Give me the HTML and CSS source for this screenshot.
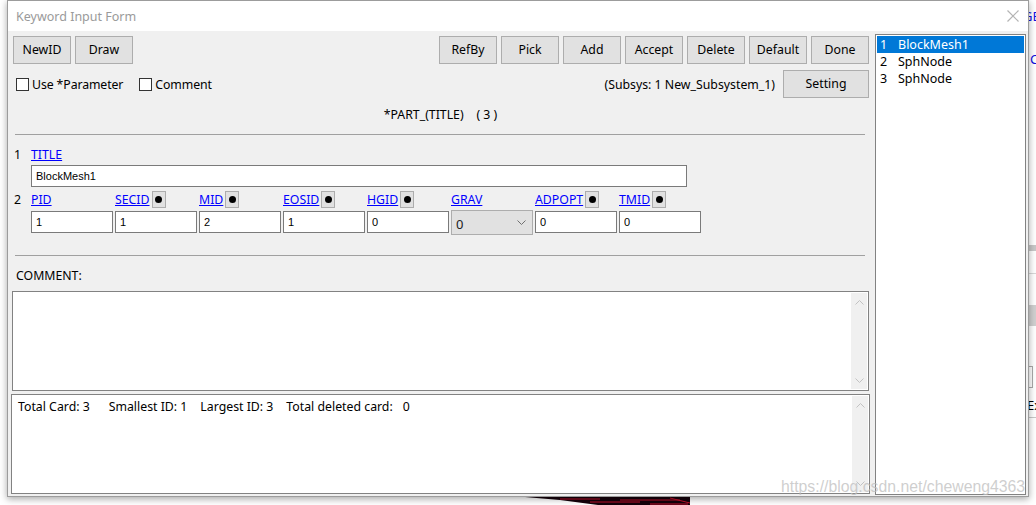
FILE: index.html
```html
<!DOCTYPE html>
<html lang="en">
<head>
    <meta charset="UTF-8">
    <title>Keyword Input Form</title>
    <link rel="stylesheet" href="styles.css">
</head>
<body>
    <div class="desktop">
        <div class="window">
            <div class="titlebar">
                <span class="title">Keyword Input Form</span>
                <svg class="close" width="12" height="12" viewBox="0 0 12 12"><path d="M0.5 0.5 L11.5 11.5 M11.5 0.5 L0.5 11.5" stroke="#b4b4b4" stroke-width="1.2" fill="none"/></svg>
            </div>
            <div class="client">
                <div class="main">
                    <!-- Command buttons -->
                    <div class="toolbar">
                        <div class="btn-group">
                            <button class="btn">NewID</button>
                            <button class="btn">Draw</button>
                        </div>
                        <div class="btn-group">
                            <button class="btn">RefBy</button>
                            <button class="btn">Pick</button>
                            <button class="btn">Add</button>
                            <button class="btn">Accept</button>
                            <button class="btn">Delete</button>
                            <button class="btn">Default</button>
                            <button class="btn">Done</button>
                        </div>
                    </div>

                    <div class="options-row">
                        <label class="check"><span class="box"></span>Use *Parameter</label>
                        <label class="check"><span class="box"></span>Comment</label>
                        <span class="subsys">(Subsys: 1 New_Subsystem_1)</span>
                        <button class="btn btn-wide">Setting</button>
                    </div>

                    <div class="keyword">*PART_(TITLE)    ( 3 )</div>
                    <div class="sep"></div>

                    <!-- Card 1 -->
                    <div class="card">
                        <span class="num">1</span>
                        <div class="label"><a class="field">TITLE</a></div>
                        <input class="field-input title-input" value="BlockMesh1">
                    </div>

                    <!-- Card 2 -->
                    <div class="card card-2">
                        <span class="num">2</span>
                        <div class="label"><a class="field">PID</a></div>
                        <div class="label"><a class="field">SECID</a><span class="pick"></span></div>
                        <div class="label"><a class="field">MID</a><span class="pick"></span></div>
                        <div class="label"><a class="field">EOSID</a><span class="pick"></span></div>
                        <div class="label"><a class="field">HGID</a><span class="pick"></span></div>
                        <div class="label"><a class="field">GRAV</a></div>
                        <div class="label"><a class="field">ADPOPT</a><span class="pick"></span></div>
                        <div class="label"><a class="field">TMID</a><span class="pick"></span></div>

                        <span></span>
                        <input class="field-input" value="1">
                        <input class="field-input" value="1">
                        <input class="field-input" value="2">
                        <input class="field-input" value="1">
                        <input class="field-input" value="0">
                        <div class="combo">
                            <span>0</span>
                            <svg width="9" height="5" viewBox="0 0 9 5"><path d="M0.5 0.5 L4.5 4.5 L8.5 0.5" stroke="#707070" fill="none"/></svg>
                        </div>
                        <input class="field-input" value="0">
                        <input class="field-input" value="0">
                    </div>

                    <div class="sep sep-2"></div>

                    <div class="comment-label">COMMENT:</div>
                    <div class="textbox comment">
                        <div class="text"></div>
                        <div class="scroll">
                            <svg width="9" height="5" viewBox="0 0 9 5"><path d="M0.5 4.5 L4.5 0.5 L8.5 4.5" stroke="#c2c2c2" fill="none"/></svg>
                            <svg width="9" height="5" viewBox="0 0 9 5"><path d="M0.5 0.5 L4.5 4.5 L8.5 0.5" stroke="#c2c2c2" fill="none"/></svg>
                        </div>
                    </div>
                    <div class="textbox status">
                        <div class="text">
                            <span class="stat stat-first">Total Card: 3</span>
                            <span class="stat">Smallest ID: 1</span>
                            <span class="stat">Largest ID: 3</span>
                            <span class="stat stat-label">Total deleted card:</span>
                            <span>0</span>
                        </div>
                        <div class="scroll">
                            <svg width="9" height="5" viewBox="0 0 9 5"><path d="M0.5 4.5 L4.5 0.5 L8.5 4.5" stroke="#c2c2c2" fill="none"/></svg>
                            <svg width="9" height="5" viewBox="0 0 9 5"><path d="M0.5 0.5 L4.5 4.5 L8.5 0.5" stroke="#c2c2c2" fill="none"/></svg>
                        </div>
                    </div>
                </div>

                <!-- Keyword list -->
                <ul class="list">
                    <li class="selected"><span class="idx">1</span>BlockMesh1</li>
                    <li><span class="idx">2</span>SphNode</li>
                    <li><span class="idx">3</span>SphNode</li>
                </ul>
            </div>
            <div class="watermark">https://blog.csdn.net/cheweng4363</div>
        </div>

        <!-- Window underneath -->
        <div class="behind">
            <span class="ghost-link">GE</span>
            <span class="ghost-link ghost-c">C</span>
            <div class="ghost-bar"></div>
            <div class="ghost-line"></div>
            <div class="ghost-bar ghost-bar-2"></div>
            <div class="ghost-box"></div>
            <span class="ghost-text">Ex</span>
            <div class="ghost-line ghost-line-2"></div>
        </div>
    </div>
    <div class="floor">
        <svg width="1036" height="8" viewBox="0 0 1036 8">
            <polygon points="525,0 690,0 690,8 598,8 560,3" fill="#14000a"/>
            <path d="M560 2 L600 2 M590 5 L640 5 M620 3 L680 3 M650 7 L688 7 M670 1 L690 6" stroke="#c4102c" stroke-width="1"/>
        </svg>
    </div>
</body>
</html>
```

FILE: styles.css
```css
* {
    box-sizing: border-box;
}
body {
    margin: 0;
    width: 1036px;
    height: 505px;
    overflow: hidden;
    background-color: #fff;
    font-family: "Noto Sans", "Noto Sans CJK SC", sans-serif;
    font-size: 12.3px;
    color: #000;
}
.desktop {
    display: flex;
    padding-left: 7px;
    height: 497px;
}
.window {
    position: relative;
    z-index: 1;
    width: 1022px;
    height: 497px;
    border: 1px solid #9c9c9c;
    background-color: #f0f0f0;
    box-shadow: 0 2px 7px rgba(0, 0, 0, 0.35);
    display: flex;
    flex-direction: column;
}
.titlebar {
    height: 30px;
    background-color: #fff;
    display: flex;
    align-items: center;
    justify-content: space-between;
    padding: 0 9px 0 8px;
}
.title {
    color: #9a9a9a;
    font-size: 12.5px;
}
.client {
    flex: 1;
    display: flex;
    gap: 2px;
    padding-right: 2px;
}
.main {
    width: 865px;
    display: flex;
    flex-direction: column;
}
.btn {
    width: 58px;
    height: 28px;
    padding: 0 0 1px;
    background-color: #e1e1e1;
    border: 1px solid #adadad;
    font-family: inherit;
    font-size: 12.3px;
    color: #000;
}
.btn-wide {
    width: 86px;
}
.toolbar {
    margin-top: 5px;
    padding: 0 4px 0 5px;
    display: flex;
    justify-content: space-between;
}
.btn-group {
    display: flex;
    gap: 4px;
}
.options-row {
    margin-top: 6px;
    height: 28px;
    padding: 0 4px 0 8px;
    display: flex;
    align-items: center;
}
.check {
    display: flex;
    align-items: center;
    gap: 3px;
    margin-right: 16px;
    letter-spacing: -0.1px;
}
.check .box {
    width: 13px;
    height: 13px;
    border: 1px solid #333;
    background-color: #fff;
}
.subsys {
    margin-left: auto;
    margin-right: 8px;
}
.keyword {
    margin-top: 7px;
    line-height: 20px;
    text-align: center;
    white-space: pre;
}
.sep {
    margin: 9px 8px 0 7px;
    border-top: 1px solid #a0a0a0;
}
.card {
    display: grid;
    grid-template-columns: 15px repeat(8, 82px);
    column-gap: 2px;
    row-gap: 2px;
    padding-left: 6px;
    margin-top: 11px;
    align-items: center;
}
.card-2 {
    margin-top: 4px;
    row-gap: 3px;
}
.num {
    line-height: 17px;
}
.label {
    height: 17px;
    display: flex;
    align-items: center;
    gap: 2px;
}
.field {
    color: #0000ff;
    text-decoration: underline;
    cursor: pointer;
}
.pick {
    width: 14px;
    height: 17px;
    background-color: #e1e1e1;
    border: 1px solid #adadad;
    display: flex;
    align-items: center;
    justify-content: center;
}
.pick::after {
    content: "";
    width: 7px;
    height: 7px;
    border-radius: 50%;
    background-color: #000;
}
.field-input {
    width: 82px;
    height: 22px;
    margin: 0;
    padding: 0 4px;
    border: 1px solid #7a7a7a;
    background-color: #fff;
    font-family: "Liberation Sans", Arial, sans-serif;
    font-size: 11px;
    color: #000;
    outline: none;
}
.title-input {
    grid-column: 2 / -1;
    width: 656px;
}
.combo {
    height: 25px;
    margin: -1px 0 -2px;
    background-color: #e1e1e1;
    border: 1px solid #adadad;
    display: flex;
    align-items: center;
    justify-content: space-between;
    padding: 2px 6px 0 4px;
    font-size: 13px;
    color: #222;
}
.combo svg {
    margin-top: -2px;
}
.sep-2 {
    margin-top: 22px;
}
.comment-label {
    margin-top: 11px;
    padding-left: 8px;
    line-height: 17px;
}
.textbox {
    display: flex;
    background-color: #fff;
    border: 1px solid #828282;
    height: 100px;
}
.textbox .text {
    flex: 1;
}
.comment {
    margin: 7px 4px 0 4px;
}
.status {
    margin: 3px 3px 0 3px;
}
.status .text {
    padding: 3px 0 0 6px;
    line-height: 17px;
    display: flex;
    white-space: pre;
}
.stat {
    margin-right: 13px;
}
.stat-first {
    margin-right: 19px;
}
.stat-label {
    margin-right: 10px;
}
.scroll {
    width: 16px;
    margin: 1px 1px 1px 0;
    background-color: #f0f0f0;
    display: flex;
    flex-direction: column;
    align-items: center;
    justify-content: space-between;
    padding: 7px 0 6px;
}
.list {
    width: 151px;
    margin: 3px 0 1px;
    padding: 1px;
    border: 1px solid #828282;
    background-color: #fff;
    list-style: none;
}
.list li {
    height: 17px;
    line-height: 17px;
    padding-left: 3px;
    font-size: 12.5px;
    display: flex;
}
.list li.selected {
    background-color: #0078d7;
    color: #fff;
}
.idx {
    width: 18px;
}
.watermark {
    position: absolute;
    left: 773px;
    top: 476px;
    font-family: "Liberation Sans", Arial, sans-serif;
    font-size: 15.8px;
    line-height: 20px;
    color: rgba(190, 190, 190, 0.75);
    white-space: nowrap;
}
.behind {
    width: 7px;
    overflow: hidden;
    display: flex;
    flex-direction: column;
    background-color: #fff;
}
.ghost-link {
    margin: 8px 0 0 -6px;
    color: #1010e0;
    font-size: 13px;
    line-height: 16px;
}
.ghost-c {
    margin: 27px 0 0 1px;
}
.ghost-bar {
    margin-top: 178px;
    height: 6px;
    background-color: #c8c8c8;
}
.ghost-line {
    margin-top: 22px;
    border-top: 1px solid #d8d8d8;
}
.ghost-bar-2 {
    margin-top: 31px;
    height: 21px;
    background-color: #d0d0d0;
}
.ghost-box {
    margin-top: 40px;
    height: 22px;
    width: 4px;
    border: 1px solid #aaa;
    border-left: none;
}
.ghost-text {
    margin: 9px 0 0 -2px;
    font-size: 13px;
    line-height: 16px;
}
.ghost-line-2 {
    margin-top: 4px;
    border-top: 1px solid #c8c8c8;
}
.floor {
    height: 8px;
}
.floor svg {
    display: block;
}
```
